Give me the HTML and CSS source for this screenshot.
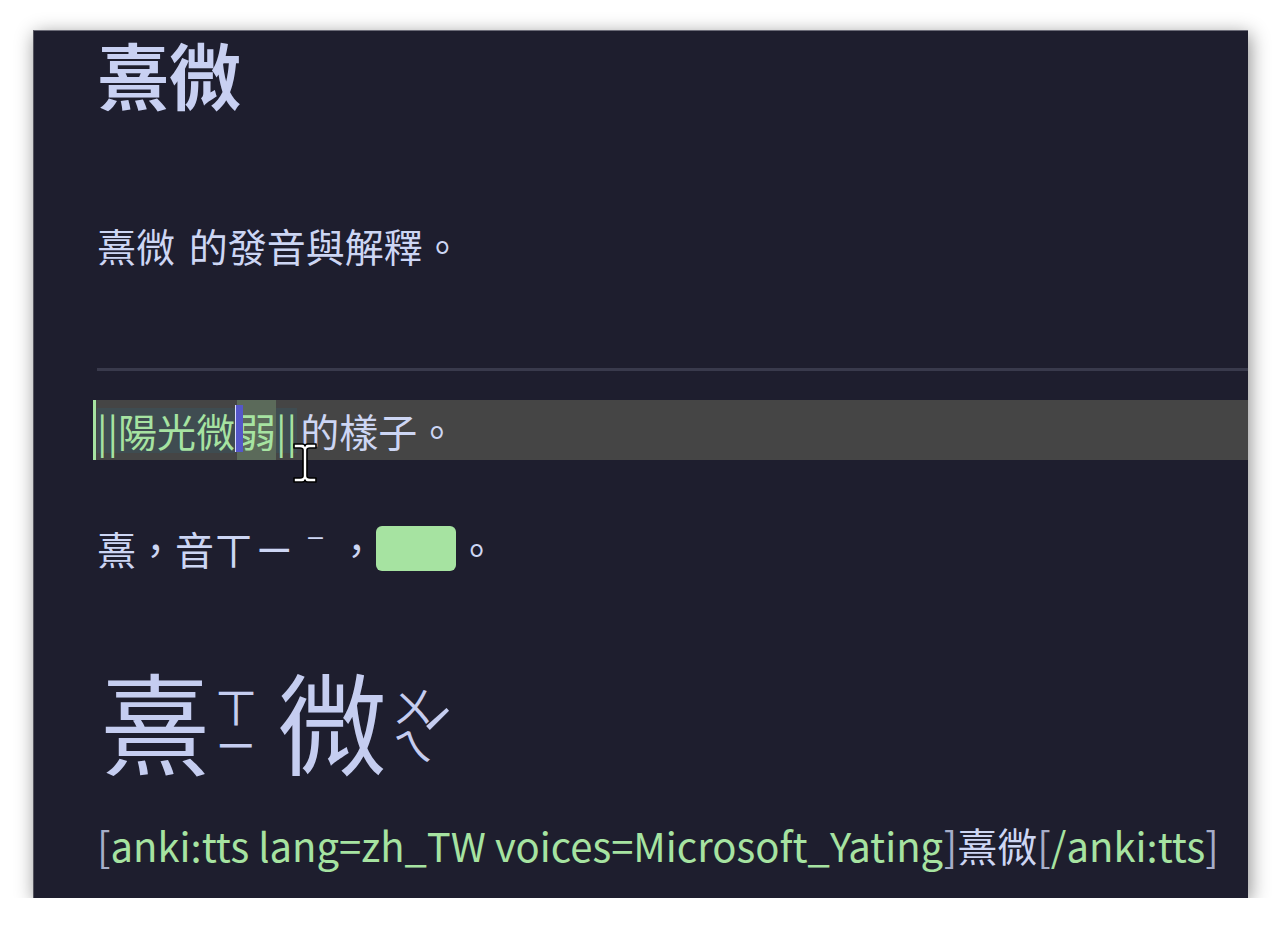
FILE: index.html
```html
<!DOCTYPE html>
<html lang="zh-Hant">
<head>
<meta charset="utf-8">
<title>熹微</title>
<link rel="stylesheet" href="styles.css">
</head>
<body>
<div class="panel">
  <div class="content">
    <h1 class="title">熹微</h1>
    <p class="line line1">熹微 的發音與解釋。</p>
    <hr class="rule">
    <div class="band">
      <span class="cloze">||陽光微</span><span class="word">弱</span><span class="cloze">||</span><span class="plain">的樣子。</span>
    </div>
    <p class="line line3">熹，音<span class="bpmf">ㄒㄧˉ</span>，<span class="hidden-box"></span>。</p>
    <div class="big">
      <span class="bigchar">熹</span>
      <span class="zhuyin"><span>ㄒ</span><span>ㄧ</span></span>
      <span class="bigchar second">微</span>
      <span class="zhuyin"><span>ㄨ</span><span>ㄟ</span></span>
      <span class="tone">ˊ</span>
    </div>
    <p class="tts"><span class="br">[</span><span class="g">anki:tts lang=zh_TW voices=Microsoft_Yating</span><span class="br">]</span>熹微<span class="br">[</span><span class="g">/anki:tts</span><span class="br">]</span></p>
  </div>
  <svg class="ibeam" width="26" height="42" viewBox="0 0 26 42" aria-hidden="true">
    <path d="M2 2 H10 Q13 2 13 4 Q13 2 16 2 H24 V6 H18 Q15 6 15 8 V34 Q15 36 18 36 H24 V40 H16 Q13 40 13 38 Q13 40 10 40 H2 V36 H8 Q11 36 11 34 V8 Q11 6 8 6 H2 Z" fill="#ffffff" stroke="#000000" stroke-width="1.6" stroke-linejoin="round"/>
  </svg>
</div>
</body>
</html>
```
FILE: styles.css
```css
html, body {
  margin: 0;
  padding: 0;
  background: #ffffff;
}
body {
  padding: 30px 0 0 33px;
  font-family: "Noto Sans CJK TC", "Noto Sans", sans-serif;
}
.panel {
  position: relative;
  width: 1214px;
  height: 867px;
  background: #1e1e2e;
  border-top: 1px solid #6c6c78;
  border-left: 1px solid #55555f;
  box-shadow: 2px 4px 18px rgba(0, 0, 0, 0.45);
  overflow: hidden;
  color: #cdd6f4;
}
.content {
  padding-left: 63px;
}
.title {
  margin: 2px 0 0 0;
  font-size: 72px;
  line-height: 80px;
  font-weight: 700;
  color: #c8d0f2;
}
.line {
  margin: 0;
  font-size: 39px;
  line-height: 48px;
  white-space: nowrap;
}
.line1 {
  margin-top: 108px;
  word-spacing: 5px;
}
.rule {
  margin: 99px 0 0 0;
  height: 3px;
  border: 0;
  background: #393a4c;
}
.band {
  margin: 29px 0 0 -4px;
  height: 60px;
  display: flex;
  align-items: center;
  background: #454545;
  border-left: 3px solid #a6e3a1;
  padding-left: 1px;
  font-size: 39px;
  white-space: nowrap;
}
.cloze {
  display: flex;
  align-items: center;
  height: 45px;
  background: #3f4c51;
  color: #a6e3a1;
}
.cloze + .word {
  margin-left: 2px;
}
.word {
  position: relative;
  display: flex;
  align-items: center;
  height: 60px;
  background: #5b6a5a;
  color: #a6e3a1;
}
.word::before {
  content: "";
  position: absolute;
  left: -2px;
  top: 5px;
  width: 7px;
  height: 47px;
  background: #5557c9;
  border-left: 1px solid #d8dcff;
}
.plain {
  color: #cdd6f4;
  padding-left: 3px;
}
.line3 {
  margin-top: 64px;
  display: flex;
  align-items: center;
}
.bpmf {
  letter-spacing: 2px;
}
.hidden-box {
  display: inline-block;
  width: 80px;
  height: 45px;
  margin-left: 0;
  margin-right: 1px;
  border-radius: 6px;
  background: #a6e3a1;
}
.big {
  margin-top: 87px;
  height: 120px;
  display: flex;
  align-items: center;
  color: #c5cdf0;
}
.bigchar {
  font-size: 110px;
  line-height: 120px;
  margin-left: 3px;
}
.bigchar.second {
  margin-left: 20px;
}
.zhuyin {
  display: flex;
  flex-direction: column;
  font-size: 42px;
  line-height: 39px;
  margin-left: 5px;
  margin-top: 10px;
}
.tone {
  font-size: 62px;
  line-height: 60px;
  margin-left: -15px;
  margin-top: 30px;
}
.tts {
  margin: 41px 0 0 0;
  font-size: 40px;
  line-height: 50px;
  white-space: nowrap;
  color: #cdd6f4;
}
.tts .g {
  color: #a6e3a1;
}
.tts .br {
  color: #a6adc8;
}
.ibeam {
  position: absolute;
  left: 258px;
  top: 411px;
}
```
